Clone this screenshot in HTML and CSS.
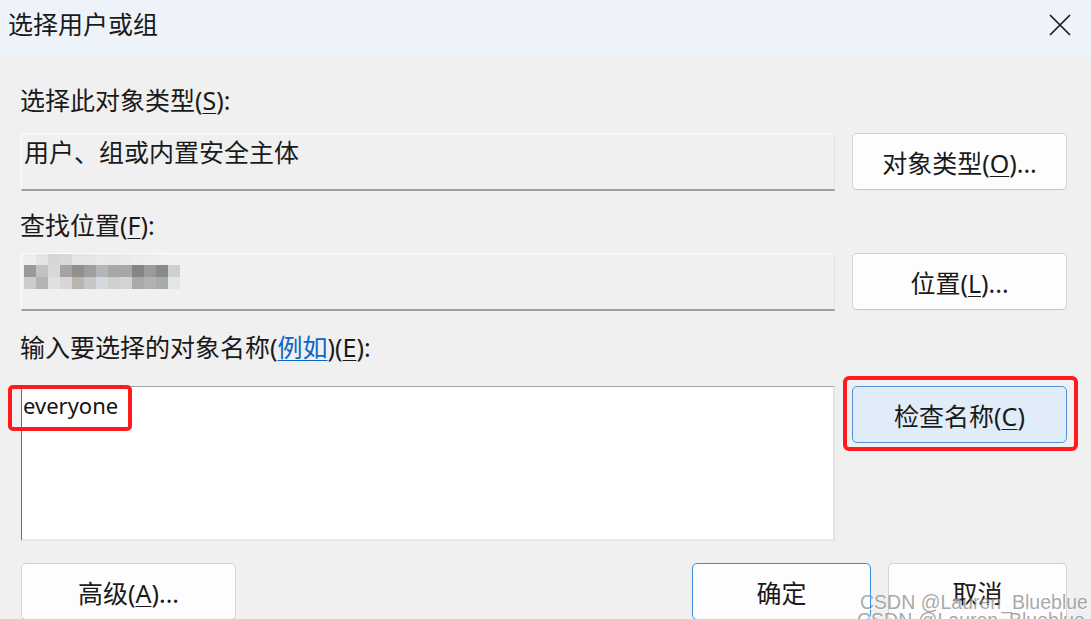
FILE: index.html
```html
<!DOCTYPE html>
<html lang="zh-CN">
<head>
<meta charset="utf-8">
<title>选择用户或组</title>
<link rel="stylesheet" href="styles.css">
</head>
<body>
<div class="dialog">
  <div class="titlebar">
    <div class="title">选择用户或组</div>
    <svg class="close" width="22" height="22" viewBox="0 0 22 22" aria-hidden="true">
      <path d="M1 1L21 21M21 1L1 21" stroke="#1b1b1b" stroke-width="1.7" fill="none"/>
    </svg>
  </div>
  <div class="content">
    <div class="label l1">选择此对象类型(<u>S</u>):</div>
    <div class="row r1">
      <div class="field"><div class="ftext">用户、组或内置安全主体</div></div>
      <button class="btn">对象类型(<u>O</u>)...</button>
    </div>
    <div class="label l2">查找位置(<u>F</u>):</div>
    <div class="row r2">
      <div class="field">
        <div class="mosaic"><div class="m m1"></div><div class="m m2"></div><div class="m m3"></div></div>
      </div>
      <button class="btn">位置(<u>L</u>)...</button>
    </div>
    <div class="label l3">输入要选择的对象名称(<a class="link">例如</a>)(<u>E</u>):</div>
    <div class="row r3">
      <div class="names"><div class="names-text">everyone</div><span class="mark"></span></div>
      <div class="check-wrap"><button class="btn btn-check">检查名称(<u>C</u>)</button></div>
    </div>
    <div class="actions">
      <button class="btn btn-adv">高级(<u>A</u>)...</button>
      <div class="actions-right">
        <button class="btn btn-small btn-ok">确定</button>
        <button class="btn btn-small">取消</button>
      </div>
    </div>
  </div>
  <div class="watermark">CSDN @Lauren_Blueblue</div>
  <div class="watermark wm2">CSDN @Lauren_Blueblue</div>
</div>
</body>
</html>
```
FILE: styles.css
```css
html, body {
  margin: 0;
  padding: 0;
  width: 1091px;
  height: 619px;
  overflow: hidden;
  background: #f0f0f0;
  font-family: "Noto Sans", "Noto Sans CJK SC", sans-serif;
  color: #1a1a1a;
}

.dialog {
  position: relative;
  height: 619px;
}

.titlebar {
  height: 55px;
  box-sizing: border-box;
  background: #eef2f9;
  display: flex;
  justify-content: space-between;
  align-items: flex-start;
  padding: 0 20px 0 8px;
}

.title {
  font-size: 25px;
  line-height: 30px;
  margin-top: 9px;
}

.close {
  margin-top: 14px;
  display: block;
}

.content {
  padding: 0 24px 0 21px;
}

.label {
  font-size: 25px;
  line-height: 30px;
  margin-left: -1px;
  white-space: nowrap;
}

u {
  text-decoration-thickness: 1px;
  text-underline-offset: 3px;
}

.link {
  color: #0a66c8;
  text-decoration: underline;
  text-decoration-thickness: 1px;
  text-underline-offset: 3px;
}

.l1 { margin-top: 30px; }
.r1 { margin-top: 18px; }
.l2 { margin-top: 19px; }
.r2 { margin-top: 13px; }
.l3 { margin-top: 21px; }
.r3 { margin-top: 24px; }

.row {
  display: flex;
  gap: 17px;
  align-items: flex-start;
}

.field {
  flex: 1;
  height: 58px;
  box-sizing: border-box;
  background: #f0f0f0;
  border-top: 1px solid #fbfbfb;
  border-left: 1px solid #fbfbfb;
  border-right: 1px solid #e4e4e4;
  border-bottom: 2px solid #9e9e9e;
}

.ftext {
  font-size: 25px;
  line-height: 30px;
  margin-top: 3px;
  padding-left: 2px;
  white-space: nowrap;
}

.mosaic {
  margin-left: 2px;
  width: 156px;
}

.m {
  height: 12px;
}

.m1 {
  height: 11px;
  background: linear-gradient(to right,
    #eeeeee 0 12px, #e4e4e4 12px 24px, #d6d6d6 24px 36px, #d8d8d8 36px 48px,
    #e5e5e5 48px 60px, #e6e6e6 60px 72px, #e9e9e9 72px 84px, #e8e8e8 84px 96px,
    #eaeaea 96px 108px, #ececec 108px 120px, #eeeeee 120px 132px, #efefef 132px 144px,
    #f0f0f0 144px 156px);
}

.m2 {
  background: linear-gradient(to right,
    #9a9a9a 0 12px, #c2c2c2 12px 24px, #d8d8d8 24px 36px, #a4a4a4 36px 48px,
    #948f8a 48px 60px, #9e9e9e 60px 72px, #b1b6bb 72px 84px, #aaa7a3 84px 96px,
    #a6a8a6 96px 108px, #8a8480 108px 120px, #9b9b9b 120px 132px, #878b90 132px 144px,
    #cdd0d2 144px 156px);
}

.m3 {
  background: linear-gradient(to right,
    #cbcbcb 0 12px, #b4b4b4 12px 24px, #e0e0e0 24px 36px, #d6d6d6 36px 48px,
    #b8b4b0 48px 60px, #c6c6c6 60px 72px, #d6d9db 72px 84px, #cfcfcf 84px 96px,
    #d4d4d4 96px 108px, #a9a9a9 108px 120px, #b3b0ae 120px 132px, #a9aba9 132px 144px,
    #e4e5e6 144px 156px);
}

.btn {
  width: 215px;
  height: 57px;
  box-sizing: border-box;
  flex: none;
  background: #fdfdfd;
  border: 1px solid #d4d4d4;
  border-bottom-color: #c4c4c4;
  border-radius: 5px;
  font-family: "Noto Sans", "Noto Sans CJK SC", sans-serif;
  font-size: 25px;
  color: #1a1a1a;
  padding: 0;
  margin: 0;
  white-space: nowrap;
}

.names {
  flex: 1;
  height: 155px;
  box-sizing: border-box;
  position: relative;
  background: #ffffff;
  border-top: 1px solid #a3a3a3;
  border-left: 1px solid #6e6e6e;
  border-right: 2px solid #e4e4e4;
  border-bottom: 2px solid #e8e8e8;
}

.names-text {
  font-family: "Noto Sans", sans-serif;
  font-size: 22px;
  line-height: 30px;
  padding: 3px 0 0 1px;
  color: #141414;
}

.mark {
  position: absolute;
  left: -14px;
  top: -2px;
  width: 124px;
  height: 46px;
  box-sizing: border-box;
  border: 4px solid #ff1b1b;
  border-radius: 5px;
}

.check-wrap {
  position: relative;
  width: 215px;
  flex: none;
}

.check-wrap::after {
  content: "";
  position: absolute;
  left: -9px;
  top: -10px;
  right: -11px;
  bottom: -8px;
  border: 4px solid #ff1b1b;
  border-radius: 6px;
}

.btn-check {
  display: block;
  background: #e0ecf8;
  border: 1px solid #4c93da;
}

.actions {
  margin-top: 22px;
  display: flex;
  justify-content: space-between;
}

.actions-right {
  display: flex;
  gap: 17px;
}

.btn-small {
  width: 179px;
}

.btn-ok {
  border: 1px solid #3a8de0;
}

.watermark {
  position: absolute;
  left: 860px;
  top: 591px;
  font-family: "Liberation Sans", sans-serif;
  font-size: 19.5px;
  line-height: 23px;
  color: rgba(110, 110, 110, 0.6);
  text-shadow: 1px 1px 0 rgba(255, 255, 255, 0.7);
  white-space: nowrap;
}

.wm2 {
  left: 857px;
  top: 609px;
}
```
